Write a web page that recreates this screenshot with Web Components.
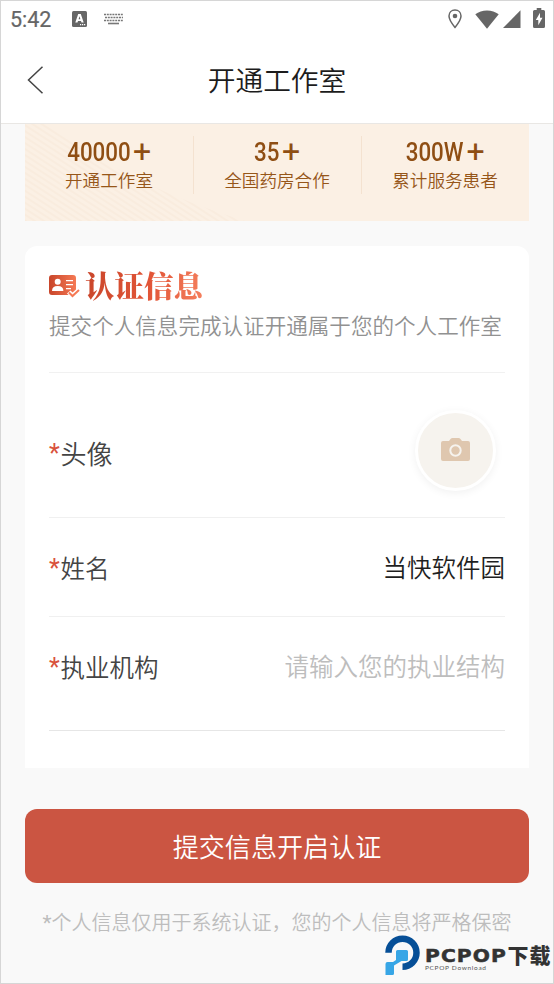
<!DOCTYPE html>
<html lang="zh-CN">
<head>
<meta charset="utf-8">
<title>开通工作室</title>
<style>
html,body{margin:0;padding:0}
body{width:554px;height:984px;overflow:hidden;background:#f9f9f9;font-family:"Noto Sans CJK SC",sans-serif;font-weight:350}
</style>
</head>
<body>
<studio-page></studio-page>
<script>
const define = (name, html) => {
  const t = document.createElement('template');
  t.innerHTML = html;
  customElements.define(name, class extends HTMLElement {
    constructor() {
      super();
      this.attachShadow({mode: 'open'}).append(t.content.cloneNode(true));
    }
  });
};

define('status-bar', `
<style>
:host{display:flex;align-items:center;height:36px;padding:0 8px 0 9px;color:#666}
span{font:21.5px/36px Roboto,sans-serif;width:62px;padding-top:1px;-webkit-text-stroke:.2px #666}
svg{display:block;fill:#666}
.gap{flex:1}
</style>
<span>5:42</span>
<svg width="15" height="16" viewBox="0 0 15 16"><rect width="15" height="16" rx="1.5"/><path d="M3.300 11.500 6.200 3h2.600l2.900 8.500H9.500l-.5-1.600H6l-.5 1.600zm3.300-3.200h1.800l-.9-3z" fill="#fff"/><path d="M8 13h1.200v1.200H8zm2 0h1.200v1.200H10zm2 0h1.200v1.200H12z" fill="#fff"/></svg>
<svg style="margin-left:17px" width="19" height="12" viewBox="0 0 19 12"><g fill="none" stroke="#777" stroke-width="1.600"><path d="M0 1.500h19" stroke-dasharray="2 .8"/><path d="M1 4.500h18" stroke-dasharray="2 .8"/><path d="M0 7.500h19" stroke-dasharray="2 .8"/><path d="M4 10.500h11"/></g></svg>
<div class="gap"></div>
<svg width="14" height="20" viewBox="0 0 14 20"><path d="M7 1.100C3.500 1.100 1 3.700 1 7.100 1 11.300 7 18.400 7 18.400s6-7.100 6-11.300C13 3.700 10.500 1.100 7 1.100z" fill="none" stroke="#666" stroke-width="1.500"/><circle cx="7" cy="7" r="2.300"/></svg>
<svg style="margin-left:13px" width="24" height="19" viewBox="0 0 24 19"><path d="M.3 4.200C3.600 1.700 7.500.4 12 .4s8.400 1.300 11.700 3.800L12 18.700z"/></svg>
<svg style="margin-left:4px" width="18" height="18" viewBox="0 0 18 18"><path d="M17.500.3V18H0z"/></svg>
<svg style="margin-left:12px;margin-top:-2px" width="12" height="20" viewBox="0 0 12 20"><path d="M1.500 2H3.700V0h4.600v2h2.200q1.500 0 1.500 1.500v15q0 1.500-1.500 1.500h-9Q0 20 0 18.500v-15Q0 2 1.500 2z"/><path d="M7 4.800 2.800 12h2.500v5.200L9.500 9.700H7z" fill="#fff"/></svg>`);

define('nav-bar', `
<style>
:host{display:grid;grid-template-columns:60px 1fr 60px;align-items:center;height:87px;box-sizing:border-box;border-bottom:1px solid #e9e7e4}
svg{margin-left:26px;display:block}
h1{margin:0;padding-bottom:2px;text-align:center;font-size:27.700px;font-weight:350;line-height:40px;color:#1c1c1c}
</style>
<svg width="18" height="30" viewBox="0 0 18 30"><path d="M15.500 1.700 1.500 15l14 13.300" fill="none" stroke="#444" stroke-width="1.500"/></svg>
<h1><slot></slot></h1>`);

define('stat-item', `
<style>
:host{display:flex;flex-direction:column;align-items:center;padding-top:11px;color:#965619}
b{font:500 26px/34px Roboto,sans-serif;color:#8f4e13;white-space:nowrap;display:flex;gap:3px}
.n{display:flex;justify-content:center;width:var(--w)}
.n ::slotted(*){display:block;transform:scaleX(.86)}
.plus{font:400 32px/33px Roboto,sans-serif;width:18px;display:flex;justify-content:center}
.l{font-size:17.600px;line-height:24px;margin-top:-1px;white-space:nowrap}
</style>
<b><span class="n"><slot name="value"></slot></span><span class="plus">+</span></b>
<span class="l"><slot></slot></span>`);

define('stats-banner', `
<style>
:host{display:grid;grid-template-columns:repeat(3,168px);height:97px;margin:0 24px;background:#fbf0e4;position:relative}
svg{position:absolute;inset:0}
stat-item{position:relative}
stat-item+stat-item::before{content:"";position:absolute;left:0;top:12px;width:1px;height:58px;background:#f4e2d0}
</style>
<svg width="504" height="97" viewBox="0 0 504 97"><defs><pattern id="p" width="5" height="5" patternUnits="userSpaceOnUse" patternTransform="rotate(33)"><path d="M0 1h5" stroke="#f7eadb" stroke-width="1.300"/></pattern></defs><path d="M0 0h22Q105 62 220 97H0z" fill="url(#p)"/></svg>
<stat-item style="--w:63px"><span slot="value">40000</span>开通工作室</stat-item>
<stat-item style="--w:25px"><span slot="value">35</span>全国药房合作</stat-item>
<stat-item style="--w:58px"><span slot="value">300W</span>累计服务患者</stat-item>`);

define('section-heading', `
<style>
:host{display:block;height:127px;box-sizing:border-box;padding-top:21px;border-bottom:1px solid #f1f1f1}
.t{display:flex;align-items:center;height:38px}
svg{display:block}
h2{margin:-4px 0 0 5px;font:900 29.500px/38px "Noto Serif CJK SC","Noto Serif SC","Noto Sans CJK SC",serif;background:linear-gradient(100deg,#c8452a,#e25537 55%,#f5805e);-webkit-background-clip:text;background-clip:text;color:transparent}
p{margin:4px 0 0;font-size:21.570px;line-height:32px;color:#919191;white-space:nowrap}
</style>
<div class="t">
<svg width="31" height="24" viewBox="0 0 31 24"><defs><linearGradient id="g"><stop stop-color="#c8452a"/><stop offset="1" stop-color="#f57954"/></linearGradient></defs><path d="M3 1h21q3 0 3 3v11.500l-3.500 3-2-2-3.500 3 1.700 1.500H3q-3 0-3-3V4q0-3 3-3z" fill="url(#g)"/><g fill="#fff"><circle cx="8.700" cy="7.700" r="3"/><path d="M3 17q0-5 5.700-5t5.700 5z"/><path d="M17 6h7v1.300h-7zm0 4h7v1.300h-7zm0 4h5v1.300h-5z"/></g><path d="m20 18.500 3.500 3.500 6.500-6" fill="none" stroke="#f57954" stroke-width="2"/></svg>
<h2><slot></slot></h2></div>
<p><slot name="note"></slot></p>`);

define('form-row', `
<style>
:host{display:flex;align-items:center;justify-content:space-between;box-sizing:border-box;height:var(--h);padding-top:var(--pt,0);padding-bottom:var(--pb,0);border-bottom:1px solid #f0f0f0;font-size:24.500px;line-height:36px;white-space:nowrap;color:#444}
.l{display:flex;font-size:var(--fs,24.500px);padding-top:2px}
i{font:400 25px/37px Roboto,sans-serif;color:#d9523c;width:11.500px}
.v{color:#1f1f1f}
</style>
<div class="l"><i>*</i><slot name="label"></slot></div>
<div class="v"><slot></slot></div>`);

define('avatar-picker', `
<style>
:host{display:flex;align-items:center;justify-content:center;width:75px;height:75px;margin:-5px 9px 0 0;border:3px solid #fff;border-radius:50%;background:#f6f3ee;box-shadow:0 2px 8px rgba(0,0,0,.06)}
</style>
<svg width="29" height="24" viewBox="0 0 29 24"><path d="M2 3h6l1.500-2q.8-1 2-1h6q1.200 0 2 1L21 3h6q2 0 2 2v16q0 2-2 2H2q-2 0-2-2V5q0-2 2-2z" fill="#dfc7af"/><circle cx="14.500" cy="12.500" r="5.200" fill="none" stroke="#f6f3ee" stroke-width="2"/></svg>`);

define('info-card', `
<style>
:host{display:block;margin:25px 24px 0;height:522px;box-sizing:border-box;padding:0 24px;border-radius:12px 12px 0 0;background:#fff}
</style><slot></slot>`);

define('submit-button', `
<style>
:host{display:block;margin:41px 24px 0}
button{display:block;width:100%;height:74px;padding:0;border:0;border-radius:12px;background:#cb5542;color:#fff;font:350 26.100px/40px "Noto Sans CJK SC",sans-serif}
</style><button><slot></slot></button>`);

define('brand-mark', `
<style>
:host{position:absolute;left:384px;top:934px;width:168px;height:42px}
svg{display:block}
</style>
<svg width="170" height="42" viewBox="0 0 170 42">
<path d="M4 19.500A14 14 0 1 1 18 33.500" fill="none" stroke="#064f97" stroke-width="6.500" transform="translate(.5 -.8)"/>
<path d="M12 17.500q0-1.500 1.500-1.500h9q1.500 0 1.500 1.500v8q0 1.500-1.500 1.500h-5L10 31.500v8q0 1.500-1.500 1.500h-7V30q0-2 2-2h5.500l3-2z" fill="#37a6e6"/>
<text x="41" y="27.500" font-family="DejaVu Sans" font-weight="700" font-size="18" letter-spacing="1" textLength="82" lengthAdjust="spacingAndGlyphs" fill="#333" stroke="#333" stroke-width=".5">PCPOP</text>
<text x="123.500" y="28.500" font-family="Noto Sans CJK SC" font-weight="900" font-size="21" textLength="43" fill="#333">下载</text>
<text x="41" y="36" font-family="Lato" font-weight="400" font-size="6.500" textLength="61" fill="#555">PCPOP Download</text>
</svg>`);

define('studio-page', `
<style>
:host{display:block;position:relative;box-sizing:border-box;width:554px;height:984px;border:1px solid #d6d6d6;background:#f9f9f9;overflow:hidden}
header{background:#fff}
.foot{margin:24px 0 0;text-align:center;font-size:20px;line-height:30px;color:#bdbdbd;white-space:nowrap}
.foot i{font:400 21px/1 Roboto,sans-serif}
.ph{color:#bdbdbd}
brand-mark{margin:-1px 0 0 -1px}
</style>
<header><status-bar></status-bar><nav-bar>开通工作室</nav-bar></header>
<stats-banner></stats-banner>
<info-card>
<section-heading>认证信息<span slot="note">提交个人信息完成认证开通属于您的个人工作室</span></section-heading>
<form-row style="--h:145px;--fs:26px;--pt:15px"><span slot="label">头像</span><avatar-picker></avatar-picker></form-row>
<form-row style="--h:99px"><span slot="label">姓名</span>当快软件园</form-row>
<form-row style="--h:114px;--pb:15px;border-color:#e6e6e6"><span slot="label">执业机构</span><span class="ph">请输入您的执业结构</span></form-row>
</info-card>
<submit-button>提交信息开启认证</submit-button>
<div class="foot"><i>*</i>个人信息仅用于系统认证，您的个人信息将严格保密</div>
<brand-mark></brand-mark>`);
</script>
</body>
</html>
